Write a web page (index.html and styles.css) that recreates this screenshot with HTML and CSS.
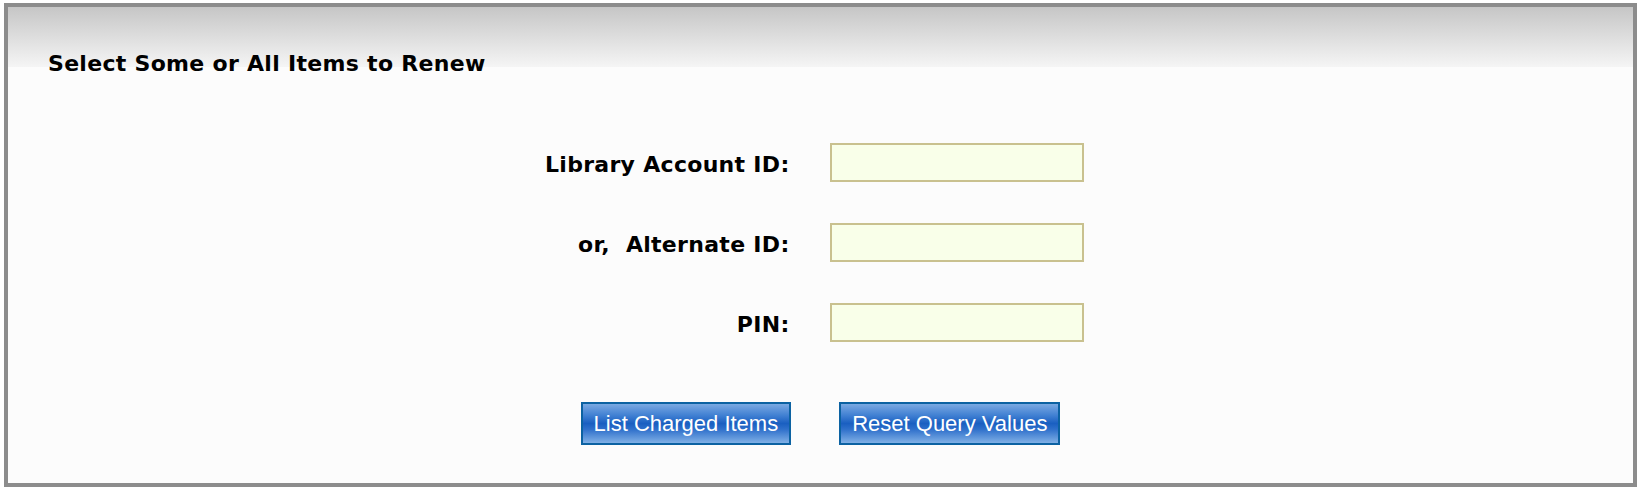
FILE: index.html
```html
<!DOCTYPE html>
<html lang="en">
<head>
<meta charset="utf-8">
<title>Renew Items</title>
<link rel="stylesheet" href="styles.css">
</head>
<body>
<div class="panel">
  <h2 class="panel-title">Select Some or All Items to Renew</h2>
  <form class="query-form">
    <div class="fields">
      <label class="field-label" for="acct">Library Account ID:</label>
      <div class="field-cell"><input class="field-input" id="acct" type="text"></div>
      <label class="field-label" for="alt">or,&nbsp; Alternate ID:</label>
      <div class="field-cell"><input class="field-input" id="alt" type="text"></div>
      <label class="field-label" for="pin">PIN:</label>
      <div class="field-cell"><input class="field-input" id="pin" type="password"></div>
    </div>
    <div class="actions">
      <button class="btn" type="button">List Charged Items</button>
      <button class="btn" type="reset">Reset Query Values</button>
    </div>
  </form>
</div>
</body>
</html>
```

FILE: styles.css
```css
html, body {
  margin: 0;
  padding: 0;
  background: #ffffff;
}

body {
  font-family: "DejaVu Sans", Verdana, sans-serif;
  color: #000;
}

.panel {
  margin: 3px 5px 5px 4px;
  border: 4px solid #8c8c8c;
  background: linear-gradient(#c6c6c6 0px, #f5f5f5 60px, #fcfcfc 60px, #fcfcfc 100%);
  padding: 44px 0 38px 0;
}

.panel-title {
  margin: 0 0 0 40px;
  font-size: 22px;
  line-height: 26px;
  font-weight: bold;
  letter-spacing: 0.3px;
}

.query-form {
  margin: 66px 0 0 0;
}

.fields {
  display: grid;
  grid-template-columns: 1fr 1fr;
  row-gap: 41px;
  align-items: center;
}

.field-label {
  text-align: right;
  padding: 5px 31px 0 0;
  font-size: 22px;
  line-height: 26px;
  font-weight: bold;
  letter-spacing: 0.3px;
  white-space: nowrap;
}

.field-cell {
  padding-left: 9px;
  display: flex;
}

.field-input {
  box-sizing: border-box;
  width: 254px;
  height: 39px;
  margin: 0;
  border: 2px solid #c9c18f;
  background: #f9ffe9;
  border-radius: 0;
  outline: none;
  padding: 0 6px;
  font-size: 18px;
}

.actions {
  display: flex;
  justify-content: center;
  gap: 48px;
  margin-top: 60px;
}

.btn {
  box-sizing: border-box;
  height: 43px;
  margin: 0;
  padding: 0 11px;
  border: 2px solid #0c62a2;
  border-radius: 0;
  background: linear-gradient(#7aa9e2 0%, #3f7fd2 30%, #1a5fc1 50%, #2f70cb 65%, #80b0e6 100%);
  color: #ffffff;
  font-family: "Liberation Sans", Arial, Helvetica, sans-serif;
  font-size: 22px;
  line-height: 26px;
  cursor: pointer;
}
```
